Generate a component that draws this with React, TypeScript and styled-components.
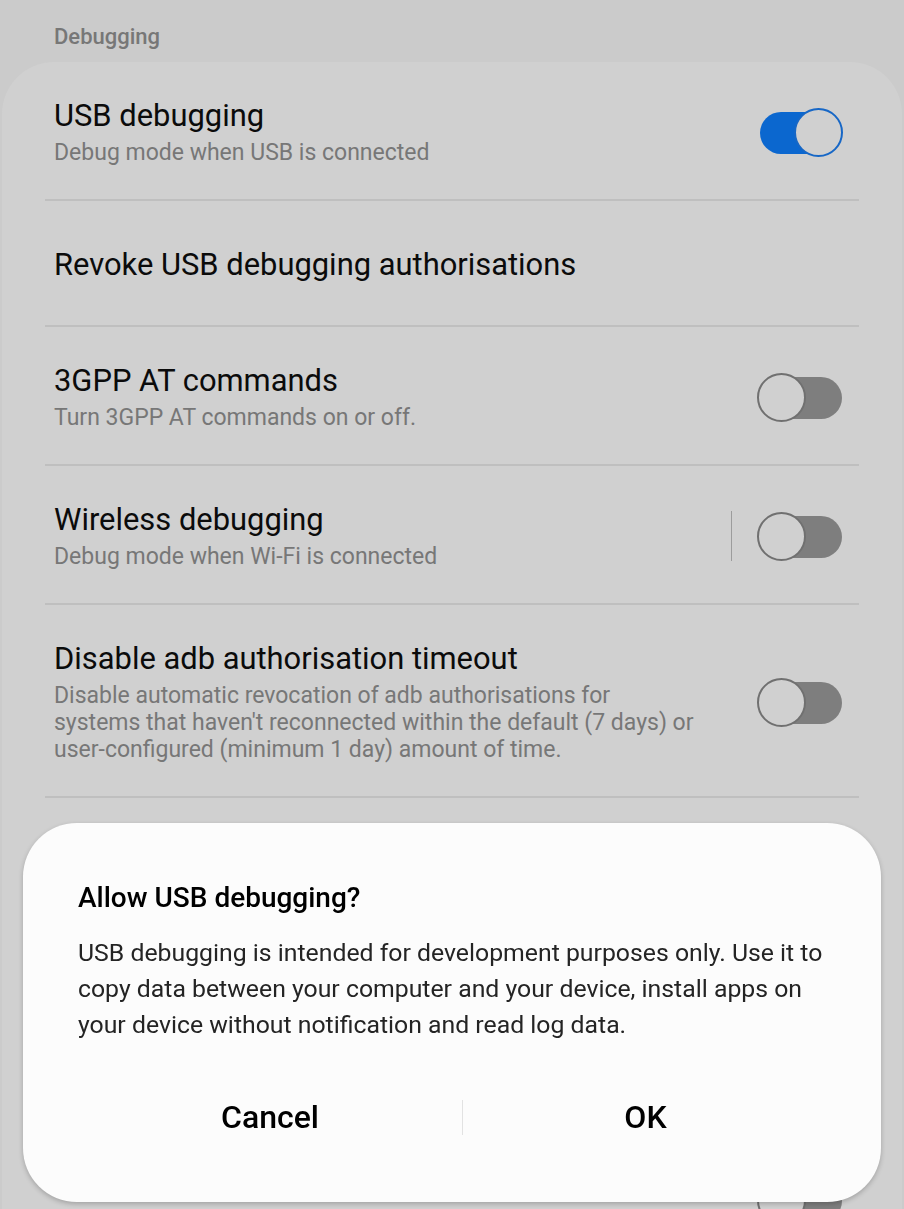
import React from "react";
import styled, { createGlobalStyle } from "styled-components";

const Global = createGlobalStyle`
  html, body { margin: 0; padding: 0; }
  body {
    background: #cbcbcb;
    font-family: Roboto, "Noto Sans", "Liberation Sans", sans-serif;
    overflow: hidden;
    height: 1209px;
  }
  * { box-sizing: border-box; }
`;

const Page = styled.div`
  display: flex;
  flex-direction: column;
  width: 904px;
`;

const SectionHeader = styled.div`
  padding: 25px 54px 13px;
  font-size: 22px;
  line-height: 24px;
  font-weight: 500;
  color: #777777;
`;

const Card = styled.div`
  margin: 0 2px;
  background: #d0d0d0;
  border-radius: 52px 52px 0 0;
  display: flex;
  flex-direction: column;
`;

const Row = styled.div`
  display: flex;
  align-items: center;
  min-height: 124px;
  padding: 36px 60px 33px 52px;
  gap: 20px;
`;

const Texts = styled.div`
  flex: 1;
  display: flex;
  flex-direction: column;
  white-space: nowrap;
`;

const Title = styled.div`
  font-size: 30.9px;
  line-height: 36px;
  color: #0b0b0b;
`;

const Summary = styled.div`
  margin-top: 5px;
  font-size: 23px;
  line-height: 27px;
  color: #777777;
`;

const Divider = styled.div`
  height: 2px;
  margin: 0 43px;
  background: #bfbfbf;
`;

const VDivider = styled.div`
  width: 1px;
  height: 50px;
  background: #9c9c9c;
  margin-right: 5px;
`;

const ToggleBox = styled.div`
  position: relative;
  flex: 0 0 auto;
  width: 85px;
  height: 49px;
`;

const Track = styled.div<{ $on: boolean }>`
  position: absolute;
  left: 3px;
  right: 0;
  top: 4px;
  height: 42px;
  border-radius: 21px;
  background: ${(p) => (p.$on ? "#0b67cf" : "#7e7e7e")};
`;

const Knob = styled.div<{ $on: boolean }>`
  position: absolute;
  top: 0;
  ${(p) => (p.$on ? "right: -1px;" : "left: 0;")}
  width: 49px;
  height: 49px;
  border-radius: 50%;
  background: #d0d0d0;
  border: 2px solid ${(p) => (p.$on ? "#1767c6" : "#707070")};
`;

const Toggle = ({ on }: { on: boolean }) => (
  <ToggleBox>
    <Track $on={on} />
    <Knob $on={on} />
  </ToggleBox>
);

const Dialog = styled.div`
  position: fixed;
  left: 23px;
  top: 823px;
  width: 858px;
  height: 379px;
  background: #fcfcfc;
  border-radius: 54px;
  box-shadow: 0 2px 5px rgba(0, 0, 0, 0.22);
  padding: 59px 53px 0 55px;
  display: flex;
  flex-direction: column;
`;

const DialogTitle = styled.div`
  font-size: 28px;
  line-height: 32px;
  font-weight: 500;
  color: #000;
`;

const DialogBody = styled.div`
  margin-top: 21px;
  font-size: 24.8px;
  line-height: 36px;
  color: #242424;
  white-space: nowrap;
`;

const Buttons = styled.div`
  margin-top: 56px;
  display: grid;
  grid-template-columns: 384px 1px 1fr;
  align-items: center;
  height: 36px;
`;

const DialogButton = styled.button`
  background: none;
  border: none;
  padding: 0;
  font-family: inherit;
  font-size: 32px;
  line-height: 36px;
  font-weight: 500;
  color: #000;
  text-align: center;
`;

const ButtonDivider = styled.div`
  width: 1px;
  height: 35px;
  background: #e2e2e2;
`;

export default function App() {
  return (
    <>
      <Global />
      <Page>
        <SectionHeader>Debugging</SectionHeader>
        <Card>
          <Row>
            <Texts>
              <Title>USB debugging</Title>
              <Summary>Debug mode when USB is connected</Summary>
            </Texts>
            <Toggle on />
          </Row>
          <Divider />
          <Row>
            <Texts>
              <Title>Revoke USB debugging authorisations</Title>
            </Texts>
          </Row>
          <Divider />
          <Row>
            <Texts>
              <Title>3GPP AT commands</Title>
              <Summary>Turn 3GPP AT commands on or off.</Summary>
            </Texts>
            <Toggle on={false} />
          </Row>
          <Divider />
          <Row>
            <Texts>
              <Title>Wireless debugging</Title>
              <Summary>Debug mode when Wi-Fi is connected</Summary>
            </Texts>
            <VDivider />
            <Toggle on={false} />
          </Row>
          <Divider />
          <Row>
            <Texts>
              <Title>Disable adb authorisation timeout</Title>
              <Summary>
                Disable automatic revocation of adb authorisations for
                <br />
                systems that haven't reconnected within the default (7 days) or
                <br />
                user-configured (minimum 1 day) amount of time.
              </Summary>
            </Texts>
            <Toggle on={false} />
          </Row>
          <Divider />
          <Row>
            <Texts>
              <Title>Enable verbose vendor logging</Title>
              <Summary>
                Include additional device-specific vendor logs in bug
                <br />
                reports, which may contain private information, use
                <br />
                more battery and/or use more storage.
              </Summary>
            </Texts>
            <Toggle on={false} />
          </Row>
          <Divider />
          <Row>
            <Texts>
              <Title>Bug report shortcut</Title>
              <Summary>Show a button in the power menu for bug reports</Summary>
            </Texts>
            <Toggle on={false} />
          </Row>
          <Divider />
          <Row>
            <Texts>
              <Title>Disable permission monitoring</Title>
              <Summary>Stop monitoring app permission grants</Summary>
            </Texts>
            <Toggle on={false} />
          </Row>
        </Card>
      </Page>
      <Dialog role="dialog">
        <DialogTitle>Allow USB debugging?</DialogTitle>
        <DialogBody>
          USB debugging is intended for development purposes only. Use it to
          <br />
          copy data between your computer and your device, install apps on
          <br />
          your device without notification and read log data.
        </DialogBody>
        <Buttons>
          <DialogButton>Cancel</DialogButton>
          <ButtonDivider />
          <DialogButton>OK</DialogButton>
        </Buttons>
      </Dialog>
    </>
  );
}
